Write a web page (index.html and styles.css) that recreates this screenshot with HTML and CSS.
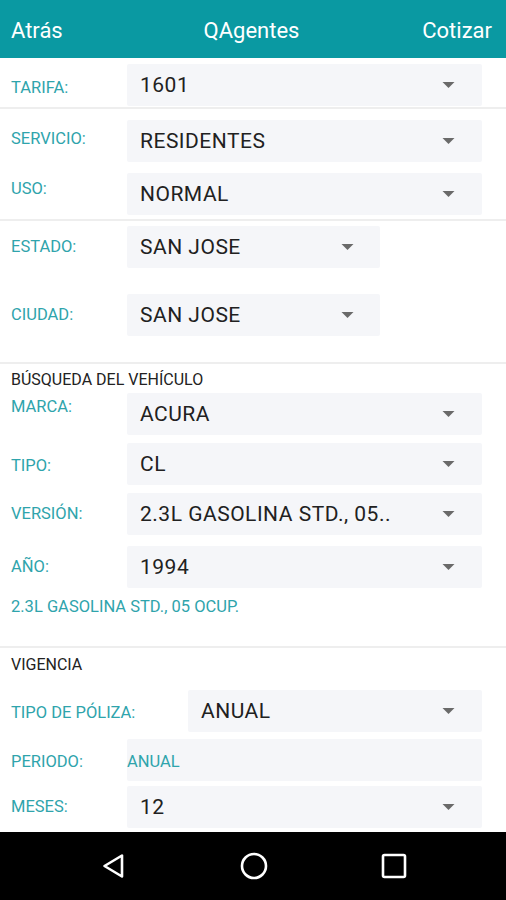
FILE: index.html
```html
<!DOCTYPE html>
<html lang="es">
<head>
    <meta charset="UTF-8">
    <meta name="viewport" content="width=device-width, initial-scale=1.0">
    <title>QAgentes - Cotizar</title>
    <link rel="stylesheet" href="styles.css">
</head>
<body>

    <div id="screen">
        <div id="appbar">
            <span class="bar-link">Atrás</span>
            <span class="bar-title">QAgentes</span>
            <span class="bar-link right">Cotizar</span>
        </div>

        <div id="form">
            <!-- Tarifa -->
            <div class="section sec-tarifa">
                <div class="row drop-3">
                    <span class="label">TARIFA:</span>
                    <div class="select"><span>1601</span><svg class="caret" viewBox="0 0 12 6"><path d="M0 0h12L6 6z"/></svg></div>
                </div>
            </div>

            <!-- Servicio / uso -->
            <div class="section sec-servicio">
                <div class="row lift-9">
                    <span class="label">SERVICIO:</span>
                    <div class="select"><span>RESIDENTES</span><svg class="caret" viewBox="0 0 12 6"><path d="M0 0h12L6 6z"/></svg></div>
                </div>
                <div class="row lift-6">
                    <span class="label">USO:</span>
                    <div class="select"><span>NORMAL</span><svg class="caret" viewBox="0 0 12 6"><path d="M0 0h12L6 6z"/></svg></div>
                </div>
            </div>

            <!-- Estado / ciudad -->
            <div class="section sec-estado">
                <div class="row">
                    <span class="label">ESTADO:</span>
                    <div class="select short"><span>SAN JOSE</span><svg class="caret" viewBox="0 0 12 6"><path d="M0 0h12L6 6z"/></svg></div>
                </div>
                <div class="row">
                    <span class="label">CIUDAD:</span>
                    <div class="select short"><span>SAN JOSE</span><svg class="caret" viewBox="0 0 12 6"><path d="M0 0h12L6 6z"/></svg></div>
                </div>
            </div>

            <!-- Vehiculo -->
            <div class="section sec-vehiculo">
                <h3 class="heading">BÚSQUEDA DEL VEHÍCULO</h3>
                <div class="row lift-4">
                    <span class="label">MARCA:</span>
                    <div class="select"><span>ACURA</span><svg class="caret" viewBox="0 0 12 6"><path d="M0 0h12L6 6z"/></svg></div>
                </div>
                <div class="row drop-2">
                    <span class="label">TIPO:</span>
                    <div class="select"><span>CL</span><svg class="caret" viewBox="0 0 12 6"><path d="M0 0h12L6 6z"/></svg></div>
                </div>
                <div class="row">
                    <span class="label">VERSIÓN:</span>
                    <div class="select"><span>2.3L GASOLINA STD., 05..</span><svg class="caret" viewBox="0 0 12 6"><path d="M0 0h12L6 6z"/></svg></div>
                </div>
                <div class="row row-year">
                    <span class="label">AÑO:</span>
                    <div class="select"><span>1994</span><svg class="caret" viewBox="0 0 12 6"><path d="M0 0h12L6 6z"/></svg></div>
                </div>
                <p class="note">2.3L GASOLINA STD., 05 OCUP.</p>
            </div>

            <!-- Vigencia -->
            <div class="section sec-vigencia">
                <h3 class="heading">VIGENCIA</h3>
                <div class="row drop-2">
                    <span class="label wide">TIPO DE PÓLIZA:</span>
                    <div class="select"><span>ANUAL</span><svg class="caret" viewBox="0 0 12 6"><path d="M0 0h12L6 6z"/></svg></div>
                </div>
                <div class="row row-period">
                    <span class="label">PERIODO:</span>
                    <div class="select plain"><span>ANUAL</span></div>
                </div>
                <div class="row">
                    <span class="label">MESES:</span>
                    <div class="select"><span>12</span><svg class="caret" viewBox="0 0 12 6"><path d="M0 0h12L6 6z"/></svg></div>
                </div>
            </div>
        </div>

        <div id="navbar">
            <svg class="nav-icon" viewBox="0 0 28 28"><path d="M22 3.5v21L4.5 14z" fill="none" stroke="#fff" stroke-width="2.6" stroke-linejoin="round"/></svg>
            <svg class="nav-icon" viewBox="0 0 28 28"><circle cx="14" cy="14" r="12" fill="none" stroke="#fff" stroke-width="2.6"/></svg>
            <svg class="nav-icon" viewBox="0 0 28 28"><rect x="3" y="3" width="22" height="22" rx="1.5" fill="none" stroke="#fff" stroke-width="2.6"/></svg>
        </div>
    </div>

</body>
</html>
```

FILE: styles.css
```css
/* General */
* {
    margin: 0;
    padding: 0;
    box-sizing: border-box;
}
html, body {
    width: 100%;
    height: 100%;
    overflow: hidden;
    background: #fff;
    font-family: Roboto, 'Noto Sans', sans-serif;
    color: #212121;
}
#screen {
    height: 900px;
    display: flex;
    flex-direction: column;
}
/* App bar */
#appbar {
    height: 58px;
    flex: 0 0 58px;
    background: #0a99a2;
    color: #fff;
    display: grid;
    grid-template-columns: 1fr auto 1fr;
    align-items: center;
    padding: 2px 14px 0 11px;
    font-size: 22px;
}
.bar-link.right {
    text-align: right;
}
/* Form */
#form {
    flex: 1;
    overflow: hidden;
}
.section {
    display: flex;
    flex-direction: column;
    border-bottom: 2px solid #eeeeee;
}
.sec-tarifa {
    padding: 6px 0 1px;
}
.sec-servicio {
    padding: 11px 0 4px;
    gap: 11px;
}
.sec-estado {
    padding: 5px 0 26px;
    gap: 26px;
}
.sec-vehiculo {
    padding: 7px 0 30px;
    gap: 8px;
}
.sec-vigencia {
    padding: 8px 0 0;
    gap: 5px;
    border-bottom: none;
}
.heading {
    font-size: 16px;
    font-weight: normal;
    line-height: 18px;
    padding-left: 11px;
    color: #222;
}
.sec-vehiculo .heading {
    margin-bottom: -4px;
}
.sec-vigencia .heading {
    margin-bottom: 11px;
}
.row {
    display: flex;
    align-items: center;
    padding-right: 24px;
}
.row-year {
    margin-top: 3px;
}
.row-period {
    margin-top: 2px;
}
.label {
    flex: 0 0 127px;
    padding-left: 11px;
    font-size: 16.5px;
    line-height: 18px;
    color: #2fa4ac;
}
.label.wide {
    flex-basis: 188px;
}
.drop-3 .label { padding-top: 5px; }
.drop-2 .label { padding-top: 3px; }
.row-period .label, .row-period .select { padding-top: 3px; }
.lift-9 .label, .lift-6 .label, .lift-4 .label {
    align-self: flex-start;
}
.lift-9 .label { padding-top: 10px; }
.lift-6 .label { padding-top: 7px; }
.lift-4 .label { padding-top: 5px; }
/* Select boxes */
.select {
    flex: 1;
    height: 42px;
    background: #f5f6f9;
    border-radius: 2px;
    display: flex;
    align-items: center;
    justify-content: space-between;
    padding: 0 27px 0 13px;
    font-size: 21px;
    letter-spacing: 0.5px;
    color: #212121;
    white-space: nowrap;
}
.select.short {
    flex: 0 0 253px;
    padding-right: 26px;
}
.select.plain {
    padding-left: 0;
    font-size: 16.5px;
    letter-spacing: 0;
    color: #2fa4ac;
}
.caret {
    width: 13px;
    height: 6px;
    fill: #6a6a6a;
}
.note {
    margin-top: 2px;
    padding-left: 11px;
    font-size: 16.5px;
    line-height: 18px;
    color: #2fa4ac;
}
/* Navigation bar */
#navbar {
    height: 68px;
    flex: 0 0 68px;
    background: #000;
    display: flex;
    justify-content: center;
    align-items: center;
    gap: 112px;
    padding-left: 2px;
}
.nav-icon {
    width: 28px;
    height: 28px;
}
```
